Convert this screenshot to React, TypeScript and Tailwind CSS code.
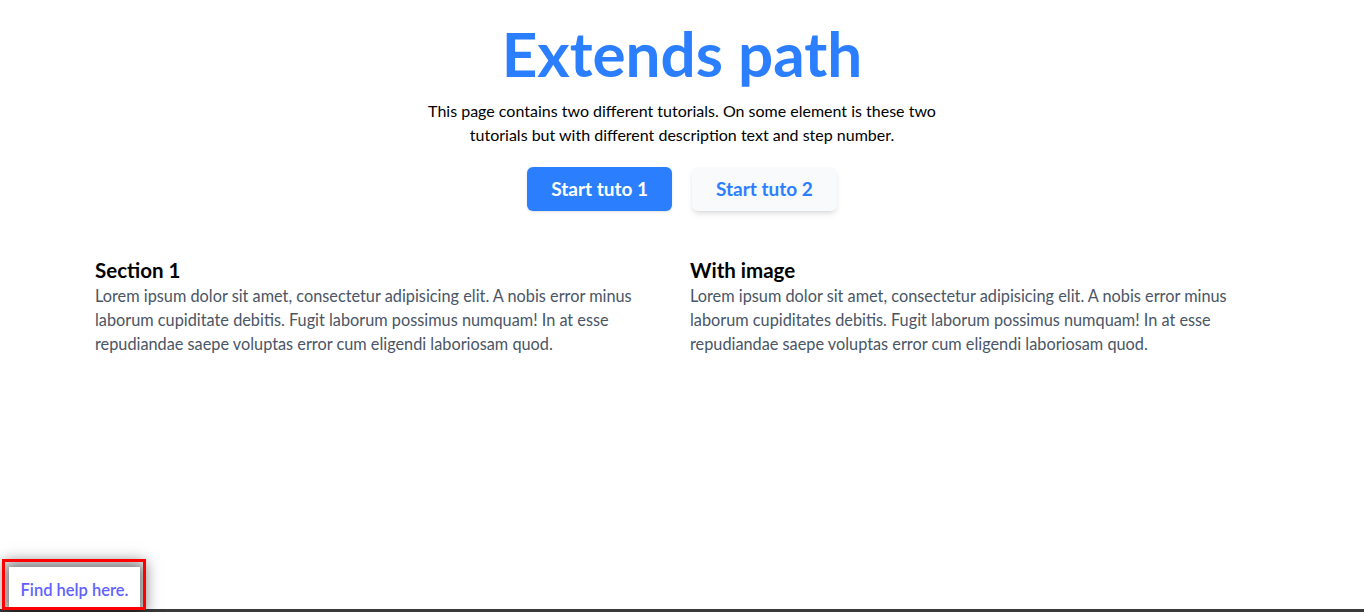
const lorem1 =
  "Lorem ipsum dolor sit amet, consectetur adipisicing elit. A nobis error minus laborum cupiditate debitis. Fugit laborum possimus numquam! In at esse repudiandae saepe voluptas error cum eligendi laboriosam quod.";
const lorem2 =
  "Lorem ipsum dolor sit amet, consectetur adipisicing elit. A nobis error minus laborum cupiditates debitis. Fugit laborum possimus numquam! In at esse repudiandae saepe voluptas error cum eligendi laboriosam quod.";

const Section = ({ title, text }: { title: string; text: string }) => (
  <div>
    <h2 className="text-[20.5px] font-bold text-black leading-7">{title}</h2>
    <p className="text-[16.3px] leading-6 text-gray-600">{text}</p>
  </div>
);

export default function App() {
  return (
    <div className="relative h-[612px] w-full overflow-hidden bg-white font-['Lato',sans-serif]">
      <div className="flex flex-col items-center pt-[23px]">
        <h1 className="text-[62px] font-bold leading-[60px] text-blue-500">Extends path</h1>
        <p className="mt-4 max-w-[520px] text-center text-base leading-6 text-black">
          This page contains two different tutorials. On some element is these two tutorials but with different
          description text and step number.
        </p>
        <div className="mt-5 flex gap-5">
          <button className="h-11 rounded-md bg-blue-500 px-6 text-[19px] font-bold text-white shadow-sm">
            Start tuto 1
          </button>
          <button className="h-11 rounded-md bg-gray-50 px-6 text-[19px] font-bold text-blue-500 shadow-md">
            Start tuto 2
          </button>
        </div>
      </div>

      <div className="mt-[45px] grid grid-cols-2 gap-4 px-[95px]">
        <Section title="Section 1" text={lorem1} />
        <Section title="With image" text={lorem2} />
      </div>

      <div className="absolute bottom-0 left-0 h-[3px] w-full bg-[#3a3a3a]" />

      {/* help button with tutorial highlight on top */}
      <div className="absolute bottom-[2px] left-[9px] flex h-[43px] w-[131px] items-center justify-center bg-white pt-[4px] shadow-[0_0_14px_5px_rgba(0,0,0,0.55)]">
        <span className="text-[16.5px] font-semibold text-indigo-500">Find help here.</span>
      </div>
      <div className="pointer-events-none absolute bottom-[2px] left-[2px] h-[51px] w-[144px] border-[3px] border-[#ff0000]" />
    </div>
  );
}
